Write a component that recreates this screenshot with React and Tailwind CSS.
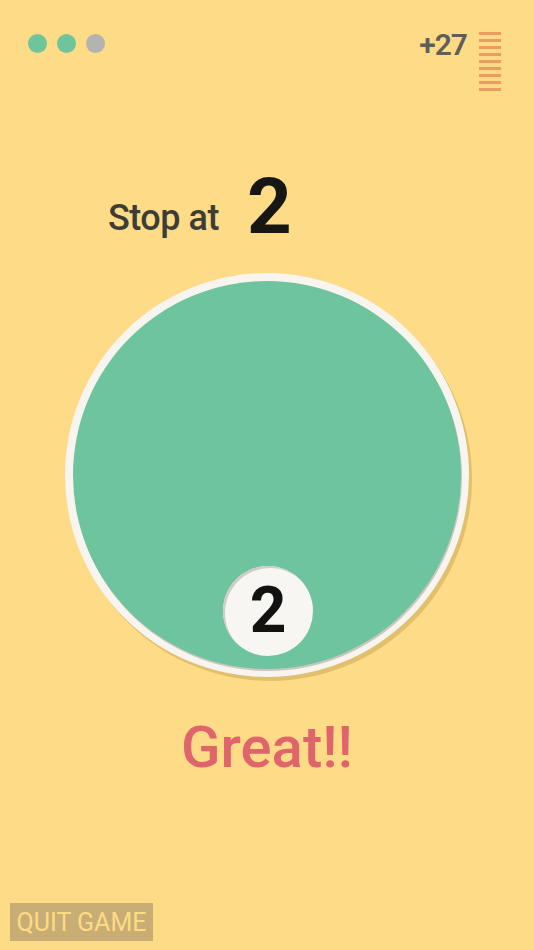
import React from 'react';

const Stripes = () => (
    <div className="flex flex-col gap-[4px] w-[22px]">
        {[0, 1, 2, 3, 4, 5, 6, 7, 8].map((i) => (
            <span key={i} className="block h-[3px] w-full bg-[#ec9c60]"></span>
        ))}
    </div>
);

const App = () => {
    return (
        <div
            className="min-h-[950px] w-full bg-[#fedb86] flex flex-col relative"
            style={{ fontFamily: 'Roboto, "Liberation Sans", sans-serif' }}
        >
            {/* top bar */}
            <div className="flex items-start justify-between pl-[28px] pr-[33px] pt-[32px]">
                <div className="flex gap-[10px] pt-[2px]">
                    <span className="w-[19px] h-[19px] rounded-full bg-[#6ec59c]"></span>
                    <span className="w-[19px] h-[19px] rounded-full bg-[#6ec59c]"></span>
                    <span className="w-[19px] h-[19px] rounded-full bg-[#b3b3b0]"></span>
                </div>
                <div className="flex items-start gap-[12px]">
                    <span className="text-[30px] leading-none font-semibold text-[#5e5e5a] tracking-[-1px] mt-[-2px]">+27</span>
                    <Stripes />
                </div>
            </div>

            {/* target */}
            <div className="flex items-end justify-start gap-[28px] mt-[86px] pl-[108px]">
                <span className="text-[36px] leading-none font-medium text-[#3d3d38] mb-[1px] tracking-[-0.5px]">Stop at</span>
                <span className="text-[78px] leading-[60px] font-bold text-[#161613] tracking-[-2px]">2</span>
            </div>

            {/* dial */}
            <div className="flex justify-center mt-[36px]">
                <div className="relative w-[404px] h-[404px] rounded-full bg-[#f8f5f0] shadow-[3px_4px_0_rgba(190,160,80,0.45)] flex items-center justify-center">
                    <div className="w-[388px] h-[388px] rounded-full bg-[#6ec49c] shadow-[1px_2px_0_#c9c6c0]"></div>
                    <div className="absolute left-[158px] top-[293px] w-[90px] h-[90px] rounded-full bg-[#f8f6f2] shadow-[inset_2px_2px_0_#cfccc6] flex items-center justify-center">
                        <span className="text-[64px] leading-none font-bold text-[#121210]">2</span>
                    </div>
                </div>
            </div>

            {/* feedback */}
            <div className="flex justify-center mt-[41px]">
                <span className="text-[58px] leading-none font-medium text-[#e0646b]">Great!!</span>
            </div>

            {/* quit */}
            <div className="mt-auto pl-[10px] pb-[9px]">
                <button className="h-[38px] w-[143px] bg-[#c8ae74] text-[#fddb84] text-[25px] leading-none font-normal flex items-center justify-center">
                    QUIT GAME
                </button>
            </div>
        </div>
    );
};

export default App;
